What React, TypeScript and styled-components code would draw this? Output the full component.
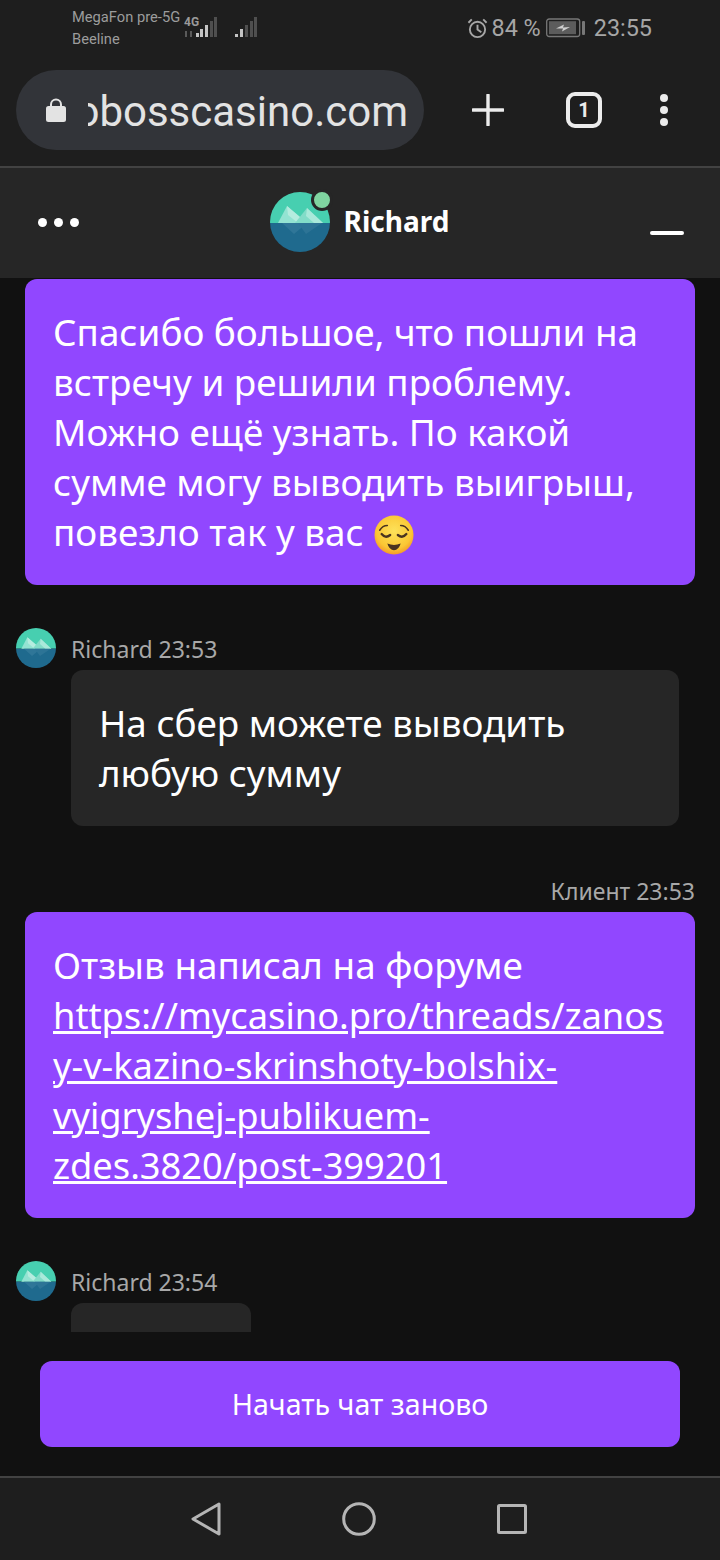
import { FC, ReactNode } from 'react';
import styled, { createGlobalStyle } from 'styled-components';

const GlobalStyle = createGlobalStyle`
  html, body {
    margin: 0;
    padding: 0;
    background: #111111;
  }
  * {
    box-sizing: border-box;
  }
`;

const AgentAvatar: FC<{ size: number }> = ({ size }) => (
  <svg width={size} height={size} viewBox="0 0 60 60">
    <defs>
      <clipPath id="avatarClip">
        <circle cx="30" cy="30" r="30" />
      </clipPath>
    </defs>
    <g clipPath="url(#avatarClip)">
      <rect width="60" height="31" fill="#47cfb0" />
      <rect y="31" width="60" height="29" fill="#1f6a8e" />
      <path d="M8 31 L17 14 L37 31 Z" fill="#93e3d2" />
      <path d="M17 14 L37 31 L28 31 L18 23 Z" fill="#b5ecdf" />
      <path d="M25 31 L37 16 L53 31 Z" fill="#82dcc8" />
      <path d="M37 16 L53 31 L44 31 L36 24 Z" fill="#a9e9da" />
      <path d="M12 31 L37 31 L24 42 Z" fill="#2f7698" />
      <path d="M28 31 L52 31 L36 42 Z" fill="#2d7496" />
    </g>
  </svg>
);

const RelievedEmoji: FC = () => (
  <EmojiSvg width="40" height="40" viewBox="0 0 42 42">
    <defs>
      <radialGradient id="emojiFace" cx="50%" cy="40%" r="60%">
        <stop offset="0%" stopColor="#fde25a" />
        <stop offset="75%" stopColor="#fbc734" />
        <stop offset="100%" stopColor="#f49a2a" />
      </radialGradient>
    </defs>
    <circle cx="21" cy="21" r="20.5" fill="url(#emojiFace)" />
    <g fill="none" stroke="#4a3420" strokeLinecap="round">
      <path d="M6 16 Q9 11 14 11" strokeWidth="1.6" />
      <path d="M36 16 Q33 11 28 11" strokeWidth="1.6" />
      <path d="M8 20 Q12 25 17 21" strokeWidth="2.4" />
      <path d="M25 21 Q30 25 34 20" strokeWidth="2.4" />
    </g>
    <path d="M14 30 Q21 33 28 30 Q26 37 21 37 Q16 37 14 30 Z" fill="#4a3420" />
  </EmojiSvg>
);

const Bubble: FC<{ children: ReactNode; client?: boolean }> = ({ children, client }) =>
  client ? <ClientBubble>{children}</ClientBubble> : <AgentBubble>{children}</AgentBubble>;

const AgentMeta: FC<{ time: string }> = ({ time }) => (
  <MetaRow>
    <AgentAvatar size={40} />
    <MetaText>Richard {time}</MetaText>
  </MetaRow>
);

export default function App() {
  return (
    <Page>
      <GlobalStyle />
      <StatusBar>
        <Carriers>
          <span>MegaFon pre-5G</span>
          <span>Beeline</span>
        </Carriers>
        <SignalGroup>
          <svg width="33" height="22" viewBox="0 0 33 22" overflow="visible">
            <text x="0" y="9" fontFamily="Roboto" fontWeight="700" fontSize="12" fill="#9a9a9a">4G</text>
            <path d="M2 14v6M7 14v6" stroke="#5a5a5a" strokeWidth="2" />
            <rect x="12" y="16" width="3" height="4" fill="#c4c4c4" />
            <rect x="16" y="12" width="3" height="8" fill="#c4c4c4" />
            <rect x="21" y="8" width="3" height="12" fill="#c4c4c4" />
            <rect x="26" y="4" width="3" height="16" fill="#4f4f4f" />
            <rect x="30" y="0" width="3" height="20" fill="#4f4f4f" />
          </svg>
          <svg width="22" height="22" viewBox="0 0 22 22">
            <rect x="0" y="17" width="3" height="3" fill="#c4c4c4" />
            <rect x="5" y="12" width="3" height="8" fill="#c4c4c4" />
            <rect x="10" y="8" width="3" height="12" fill="#4f4f4f" />
            <rect x="15" y="4" width="3" height="16" fill="#4f4f4f" />
            <rect x="19" y="0" width="3" height="20" fill="#4f4f4f" />
          </svg>
        </SignalGroup>
        <StatusRight>
          <svg width="21" height="21" viewBox="0 0 22 22" fill="none" stroke="#a6a6a6" strokeWidth="2">
            <circle cx="11" cy="12" r="8" />
            <path d="M11 7v5l4 3M1.5 5L5 1.5M20.5 5L17 1.5" />
          </svg>
          <StatusText>84 %</StatusText>
          <BatteryIcon width="39" height="20" viewBox="0 0 39 20">
            <rect x="0.7" y="1" width="33" height="17.5" rx="2.5" fill="none" stroke="#777" strokeWidth="1.3" />
            <rect x="3" y="3.2" width="27" height="13" fill="#5c5c5c" />
            <path d="M10 10.5l8-4-1 3 7-.5-8 4.5 1-3z" fill="#cfcfcf" />
            <rect x="36" y="3" width="3" height="14" rx="1" fill="#777" />
          </BatteryIcon>
          <StatusText>23:55</StatusText>
        </StatusRight>
      </StatusBar>

      <BrowserBar>
        <UrlPill>
          <svg width="20" height="26" viewBox="0 0 20 26">
            <path d="M5 11V7.5a5 5 0 0 1 10 0V11" fill="none" stroke="#e3e3e3" strokeWidth="2" />
            <rect y="9" width="20" height="16" rx="2.5" fill="#e3e3e3" />
          </svg>
          <UrlClip>
            <UrlText>oobosscasino.com</UrlText>
          </UrlClip>
        </UrlPill>
        <BrowserActions>
          <svg width="32" height="32" viewBox="0 0 32 32" stroke="#ececec" strokeWidth="3.4" strokeLinecap="round">
            <path d="M16 1v30M1 16h30" />
          </svg>
          <TabCounter>1</TabCounter>
          <MoreDots>
            <i />
            <i />
            <i />
          </MoreDots>
        </BrowserActions>
      </BrowserBar>

      <ChatHeader>
        <HeaderDots>
          <i />
          <i />
          <i />
        </HeaderDots>
        <HeaderAgent>
          <HeaderAvatar>
            <AgentAvatar size={60} />
            <OnlineDot />
          </HeaderAvatar>
          <HeaderName>Richard</HeaderName>
        </HeaderAgent>
        <MinimizeBar />
      </ChatHeader>

      <MessageList>
        <ClientGroup>
          <Bubble client>
            Спасибо большое, что пошли на встречу и решили проблему. Можно ещё узнать. По какой
            сумме могу выводить выигрыш, повезло так у вас <RelievedEmoji />
          </Bubble>
        </ClientGroup>
        <AgentGroup>
          <AgentMeta time="23:53" />
          <Bubble>На сбер можете выводить любую сумму</Bubble>
        </AgentGroup>
        <ClientGroup $spaced>
          <MetaText>Клиент 23:53</MetaText>
          <Bubble client>
            Отзыв написал на форуме{' '}
            <MessageLink>
              https://mycasino.pro/threads/zanosy-v-kazino-skrinshoty-bolshix-vyigryshej-publikuem-zdes.3820/post-399201
            </MessageLink>
          </Bubble>
        </ClientGroup>
        <AgentGroup>
          <AgentMeta time="23:54" />
          <CutBubble />
        </AgentGroup>
      </MessageList>

      <ChatFooter>
        <RestartButton>Начать чат заново</RestartButton>
      </ChatFooter>

      <NavBar>
        <svg width="30" height="34" viewBox="0 0 30 34" fill="none" stroke="#b5b5b5" strokeWidth="3" strokeLinejoin="round">
          <path d="M28 2 L2 17 L28 32 Z" />
        </svg>
        <svg width="34" height="34" viewBox="0 0 34 34" fill="none" stroke="#b5b5b5" strokeWidth="3">
          <circle cx="17" cy="17" r="15.3" />
        </svg>
        <svg width="30" height="30" viewBox="0 0 30 30" fill="none" stroke="#b5b5b5" strokeWidth="3" strokeLinejoin="round">
          <rect x="1.5" y="1.5" width="27" height="27" rx="1" />
        </svg>
      </NavBar>
    </Page>
  );
}

const Page = styled.div`
  width: 720px;
  height: 1560px;
  display: flex;
  flex-direction: column;
  overflow: hidden;
  background: #111111;
  font-family: 'Noto Sans', sans-serif;
`;

const StatusBar = styled.div`
  height: 70px;
  flex: none;
  display: flex;
  align-items: flex-start;
  padding: 8px 68px 0 72px;
  background: #1e1e1e;
`;

const Carriers = styled.div`
  width: 112px;
  display: flex;
  flex-direction: column;
  gap: 3px;
  font-family: Roboto, sans-serif;
  font-size: 14.7px;
  line-height: 19px;
  color: #9c9c9c;
  white-space: nowrap;
`;

const SignalGroup = styled.div`
  display: flex;
  align-items: flex-start;
  gap: 18px;
  margin-top: 9px;
`;

const StatusRight = styled.div`
  margin-left: auto;
  display: flex;
  align-items: center;
  gap: 4px;
  height: 40px;
`;

const BatteryIcon = styled.svg`
  margin: 0 5px 0 1px;
`;

const StatusText = styled.span`
  font-family: Roboto, sans-serif;
  font-size: 23.4px;
  color: #a6a6a6;
  white-space: nowrap;
`;

const BrowserBar = styled.div`
  height: 98px;
  flex: none;
  display: flex;
  align-items: flex-start;
  padding-left: 16px;
  background: #1e1e1e;
  border-bottom: 2px solid #424242;
`;

const UrlPill = styled.div`
  width: 408px;
  height: 80px;
  display: flex;
  align-items: center;
  padding-left: 30px;
  border-radius: 40px;
  background: #323439;
`;

const UrlClip = styled.div`
  width: 320px;
  margin-left: 22px;
  padding-top: 3px;
  display: flex;
  justify-content: flex-end;
  overflow: hidden;
`;

const UrlText = styled.span`
  font-family: Roboto, sans-serif;
  font-size: 42px;
  line-height: 48px;
  color: #e3e3e3;
  white-space: nowrap;
`;

const BrowserActions = styled.div`
  flex: 1;
  height: 80px;
  display: flex;
  align-items: center;
  padding-left: 48px;
  gap: 63px;
`;

const TabCounter = styled.div`
  width: 36px;
  height: 36px;
  margin-left: -1px;
  display: flex;
  align-items: center;
  justify-content: center;
  border: 4px solid #ececec;
  border-radius: 9px;
  font-family: Roboto, sans-serif;
  font-size: 20px;
  font-weight: 700;
  color: #ececec;
`;

const MoreDots = styled.div`
  display: flex;
  flex-direction: column;
  gap: 4px;
  margin-left: -5px;

  i {
    width: 8px;
    height: 8px;
    border-radius: 50%;
    background: #ececec;
  }
`;

const ChatHeader = styled.div`
  height: 110px;
  flex: none;
  display: flex;
  align-items: center;
  justify-content: space-between;
  padding: 0 36px 0 38px;
  background: #262626;
`;

const HeaderDots = styled.div`
  display: flex;
  gap: 7px;
  margin-top: -1px;

  i {
    width: 9px;
    height: 9px;
    border-radius: 50%;
    background: #ffffff;
  }
`;

const HeaderAgent = styled.div`
  display: flex;
  align-items: center;
  gap: 14px;
  margin-right: 10px;
  margin-top: -2px;
`;

const HeaderAvatar = styled.div`
  position: relative;
  height: 60px;
`;

const OnlineDot = styled.span`
  position: absolute;
  top: -3px;
  right: -3px;
  width: 22px;
  height: 22px;
  border: 3px solid #262626;
  border-radius: 50%;
  background: #7fd4a0;
`;

const HeaderName = styled.span`
  margin-top: -2px;
  font-size: 28px;
  font-weight: 700;
  color: #ffffff;
`;

const MinimizeBar = styled.span`
  width: 34px;
  height: 4px;
  margin-top: 19px;
  border-radius: 2px;
  background: #ffffff;
`;

const MessageList = styled.div`
  height: 1054px;
  flex: none;
  display: flex;
  flex-direction: column;
  overflow: hidden;
  padding: 1px 16px 0;
  background: #111111;
`;

const ClientGroup = styled.div<{ $spaced?: boolean }>`
  flex: none;
  display: flex;
  flex-direction: column;
  align-items: flex-end;
  gap: 4px;
  margin: ${({ $spaced }) => ($spaced ? '49px 9px 0 9px' : '0 9px')};
`;

const AgentGroup = styled.div`
  flex: none;
  margin-top: 43px;
`;

const MetaRow = styled.div`
  display: flex;
  align-items: center;
  gap: 16px;
  height: 42px;

  svg {
    margin-bottom: 2px;
  }
`;

const MetaText = styled.span`
  margin-left: -1px;
  font-size: 23px;
  line-height: 33px;
  color: #a8a8a8;
`;

const ClientBubble = styled.div`
  width: 670px;
  padding: 28px 28px;
  border-radius: 12px;
  background: #9147ff;
  font-size: 36.85px;
  line-height: 50px;
  color: #ffffff;
  overflow-wrap: anywhere;
`;

const AgentBubble = styled.div`
  width: 608px;
  margin-left: 55px;
  padding: 28px 28px;
  border-radius: 12px;
  background: #262626;
  font-size: 36.85px;
  line-height: 50px;
  color: #ffffff;
`;

const CutBubble = styled.div`
  width: 180px;
  height: 80px;
  margin-left: 55px;
  border-radius: 12px;
  background: #262626;
`;

const MessageLink = styled.a`
  color: #ffffff;
  font-size: 36.25px;
  text-decoration: underline;
`;

const EmojiSvg = styled.svg`
  vertical-align: -9px;
  margin-left: 1px;
`;

const ChatFooter = styled.div`
  flex: 1;
  padding: 29px 40px 0;
  background: #111111;
`;

const RestartButton = styled.button`
  display: block;
  width: 640px;
  height: 86px;
  padding-bottom: 2px;
  border: none;
  border-radius: 12px;
  background: #9147ff;
  font-family: 'Noto Sans', sans-serif;
  font-size: 28.6px;
  color: #ffffff;
`;

const NavBar = styled.div`
  height: 84px;
  flex: none;
  display: flex;
  align-items: center;
  justify-content: center;
  gap: 121px;
  padding-right: 2px;
  border-top: 2px solid #424242;
  background: #1e1e1e;
`;
